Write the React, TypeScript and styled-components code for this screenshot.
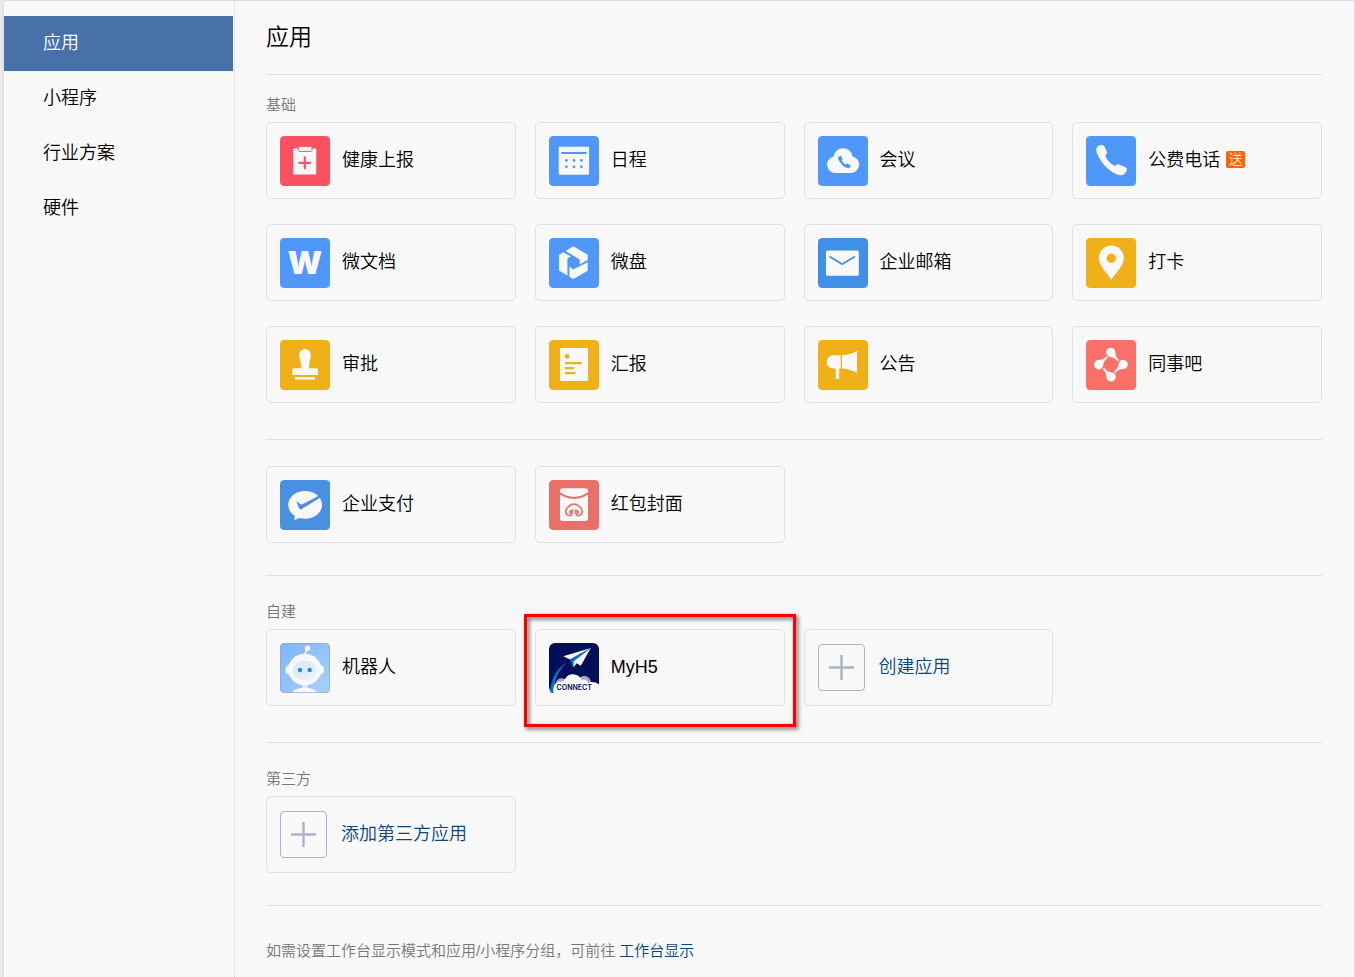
import React from "react";
import styled, { createGlobalStyle } from "styled-components";

const GlobalStyle = createGlobalStyle`
  * { box-sizing: border-box; }
  body {
    margin: 0;
    background: #e8e8e8;
    color: #000;
    font-family: "Liberation Sans", "Noto Sans CJK SC", sans-serif;
    font-weight: 350;
  }
  a { color: inherit; text-decoration: none; }
`;

const Panel = styled.div`
  display: flex;
  min-height: 100vh;
  margin-left: 3px;
  background: #f8f8f8;
  border: 1px solid #dcdde4;
  border-bottom: 0;
  border-radius: 4px 4px 0 0;
`;

const Sidebar = styled.nav`
  flex: 0 0 231px;
  padding: 15px 1px 0 0;
  border-right: 1px dotted #d4d6dc;
`;

const NavItem = styled.a<{ $active?: boolean }>`
  display: flex;
  align-items: center;
  height: 55px;
  padding: 0 0 6px 39px;
  font-size: 18px;
  color: ${(p) => (p.$active ? "#fff" : "#000")};
  background: ${(p) => (p.$active ? "#4871a9" : "transparent")};
`;

const Main = styled.main`
  flex: 1;
  min-width: 0;
  padding: 0 32px 16px 31px;
`;

const Title = styled.h1`
  margin: 0;
  height: 73px;
  font-size: 23px;
  font-weight: 350;
  line-height: 72px;
`;

const Section = styled.section<{ $top: number; $bottom: number }>`
  padding: ${(p) => p.$top}px 0 ${(p) => p.$bottom}px;
  border-top: 1px solid #dfe0e6;
`;

const SectionLabel = styled.h2`
  margin: 0 0 7px;
  font-size: 15px;
  font-weight: 350;
  line-height: 20px;
  color: #777;
`;

const Grid = styled.div`
  display: grid;
  grid-template-columns: repeat(4, 1fr);
  gap: 25px 19px;
`;

const Card = styled.a<{ $add?: boolean }>`
  position: relative;
  display: flex;
  align-items: center;
  gap: ${(p) => (p.$add ? 14 : 12)}px;
  height: 77px;
  padding: 0 13px;
  border: 1px solid #dfe0e8;
  border-radius: 5px;
  font-size: 18px;
  line-height: 24px;
  color: ${(p) => (p.$add ? "#0a4679" : "#000")};
`;

const CardText = styled.span`
  padding-bottom: 2px;
  white-space: nowrap;
`;

const Icon = styled.svg`
  flex: none;
  width: 50px;
  height: 50px;
  border-radius: 4px;
`;

const PlusBox = styled.span`
  display: grid;
  place-items: center;
  flex: none;
  width: 47px;
  height: 47px;
  border: 1px solid #abb4c4;
  border-radius: 4px;
`;

const Badge = styled.span`
  width: 19px;
  height: 17px;
  margin: 0 0 2px -6px;
  border-radius: 2px;
  background: #ff6200;
  color: #fff0dc;
  font-size: 14px;
  line-height: 16px;
  text-align: center;
`;

const Highlight = styled.span`
  position: absolute;
  inset: -16px -12px -22px;
  border: 3px solid #f80000;
  filter: drop-shadow(2px 2px 2px rgba(0, 0, 0, 0.65));
  pointer-events: none;
`;

const Footer = styled.footer`
  padding-top: 35px;
  border-top: 1px solid #dfe0e6;
  font-size: 15px;
  line-height: 20px;
  color: #777;

  a { color: #0a4679; }
`;

const W = "#f8f8f8";
const BLUE = "#4f97f8";
const YELLOW = "#efb019";
const PHONE =
  "M15 9C17 8.7 18 9.5 18.6 10.8L21 16C21.4 17 20.9 17.7 19.8 18.8C19.3 19.4 19.4 20.2 19.7 20.9C21.8 24.8 24.5 27.4 28 29.4C29 29.9 29.8 29.7 30.4 29C31.2 28.1 32.3 27.9 33.3 28.4L39.8 31.6C41 32.3 41.2 33.4 40.7 34.5C39.4 37.6 37.3 39.4 34.3 39.2C28 38.6 20.6 32.6 16.2 26.6C12.5 21.4 10.2 16.6 10.2 13.6C10.2 11.4 12.3 9.4 15 9Z";

type Glyph = { bg: string; art: React.ReactNode };

const glyphs: Record<string, Glyph> = {
  health: {
    bg: "#fb5263",
    art: (
      <>
        <rect x="13.3" y="12.5" width="22.9" height="26" rx="1.2" fill={W} />
        <rect x="18.4" y="10.4" width="13.6" height="5" rx="1.2" fill={W} stroke="#fb5263" />
        <path d="M24.8 21.3v11M19.3 26.8h11" stroke="#fb5263" strokeWidth="2.2" strokeLinecap="round" />
      </>
    ),
  },
  calendar: {
    bg: BLUE,
    art: (
      <>
        <rect x="9.7" y="10.8" width="30.4" height="28" rx="1" fill={W} />
        <path d="M12.3 17h25.4" stroke={BLUE} strokeWidth="2.2" />
        {[24.4, 30.8].map((y) =>
          [17.4, 25, 32.4].map((x) => <circle key={`${x}-${y}`} cx={x} cy={y} r="1.4" fill={BLUE} />)
        )}
      </>
    ),
  },
  meeting: {
    bg: BLUE,
    art: (
      <>
        <path d="M17.5 37A8.4 8.4 0 0 1 15.6 20.4A9.6 9.6 0 0 1 34.6 20.4A8.4 8.4 0 0 1 32.6 37Z" fill={W} />
        <path d={PHONE} fill={BLUE} transform="translate(15.9 16.2) scale(.41)" />
      </>
    ),
  },
  phone: { bg: BLUE, art: <path d={PHONE} fill={W} /> },
  doc: {
    bg: BLUE,
    art: (
      <text x="24.8" y="36" fill={W} fontFamily="Inter, sans-serif" fontWeight="900" fontSize="32" textAnchor="middle">
        W
      </text>
    ),
  },
  disk: {
    bg: BLUE,
    art: (
      <g fill={W}>
        <path d="M16.6 13L24.3 8.3L38.7 16.7V21.9L30.6 26.4V21.4Z" />
        <path d="M14.4 14.2L21.8 18.6L18.4 20.5V37.4L10 32.5V16.9Z" />
        <path d="M38.7 24.3V32.7L24.3 41L20.4 38.8V28.8L24.1 31.6Z" />
      </g>
    ),
  },
  mail: {
    bg: "#4190e8",
    art: (
      <>
        <rect x="8" y="12.4" width="32.8" height="25.4" rx="1.5" fill={W} />
        <path d="M11.5 18.5L24.2 26.3L37 18.5" fill="none" stroke="#4190e8" strokeWidth="1.7" />
      </>
    ),
  },
  pin: {
    bg: YELLOW,
    art: (
      <>
        <path d="M25.3 41.4C22 36.5 12.7 27.5 12.7 20.2A12.6 12.6 0 0 1 37.9 20.2C37.9 27.5 28.6 36.5 25.3 41.4Z" fill={W} />
        <circle cx="25.3" cy="20.3" r="4.7" fill={YELLOW} />
      </>
    ),
  },
  stamp: {
    bg: YELLOW,
    art: (
      <g fill={W}>
        <path d="M21.3 28.2C21.3 22.5 19.2 18.5 19.2 14.7A5.8 5.8 0 0 1 30.8 14.7C30.8 18.5 28.9 22.5 28.9 28.2H36.5Q38 28.2 38 29.7V35H12.2V29.7Q12.2 28.2 13.7 28.2Z" />
        <rect x="15" y="37.1" width="20" height="2.5" />
      </g>
    ),
  },
  report: {
    bg: YELLOW,
    art: (
      <>
        <rect x="11" y="8" width="28" height="33" rx="1.2" fill={W} />
        <circle cx="18.1" cy="16.3" r="2.4" fill={YELLOW} />
        <path d="M16 23.2h16.8M16 28.2h9M16 33.1h10.4" stroke={YELLOW} strokeWidth="2.2" />
      </>
    ),
  },
  horn: {
    bg: YELLOW,
    art: (
      <g fill={W}>
        <path d="M22.7 15.3V28.5H21.2V39H17.7V28.5H15.2A6.6 6.6 0 0 1 15.2 15.3Z" />
        <path d="M24 15.3C30 15 35 13.2 39 10.7V33C35 30.5 30 28.8 24 28.5Z" />
      </g>
    ),
  },
  social: {
    bg: "#fa7068",
    art: (
      <g fill={W}>
        {[0, 90, 180, 270].map((a) => (
          <path
            key={a}
            transform={`rotate(${a} 24.9 24.6)`}
            d="M24.8 7.7A4.6 4.6 0 0 1 29.4 12.2C29.5 15.6 30.7 17.8 33.2 20.3L31.7 21.5C29.7 18.7 27.8 17.4 24.4 16.9A4.6 4.6 0 0 1 24.8 7.7Z"
          />
        ))}
      </g>
    ),
  },
  pay: {
    bg: "#4991e0",
    art: (
      <>
        <path d="M25 11C34.4 11 42 17 42 24.8C42 32.6 34.4 38.8 25 38.8C23 38.8 21 38.5 19.4 38L14.3 40.3L14.8 35.8C10.6 33.2 8.2 29.3 8.2 24.8C8.2 17 15.6 11 25 11Z" fill={W} />
        <path d="M16.3 21.2C17.5 21.2 19 23.6 20.9 24.3C22 24.6 22.9 24 24 23.5L40.2 15L41.3 17.1L21.7 28.9C20.4 29.6 19.6 29.3 19 28Z" fill="#4991e0" />
      </>
    ),
  },
  packet: {
    bg: "#e87068",
    art: (
      <>
        <rect x="11" y="8.2" width="28" height="32.7" rx="2.6" fill={W} />
        <path d="M10.6 13.2Q25 22.6 39.4 13.2" fill="none" stroke="#e87068" strokeWidth="2" />
        <path
          d="M22.6 30.6A1.5 1.5 0 1 0 23.4 33.2V30.2M27.4 30.6A1.5 1.5 0 1 1 26.6 33.2V30.2M22.6 35.2C18.6 36.4 16.3 34 17 30.6C17.8 27 21.6 24.2 25 24.2C28.4 24.2 32.2 27 33 30.6C33.7 34 31.4 36.4 27.4 35.2"
          fill="none"
          stroke="#e87068"
          strokeWidth="1.7"
          strokeLinecap="round"
        />
      </>
    ),
  },
  robot: {
    bg: "url(#robotSky)",
    art: (
      <>
        <defs>
          <linearGradient id="robotSky" x1="0" y1="0" x2="1" y2="1">
            <stop offset="0" stopColor="#7fb4f8" />
            <stop offset="1" stopColor="#a9d2fa" />
          </linearGradient>
          <linearGradient id="robotFace" x1="0" y1="0" x2="1" y2="1">
            <stop offset="0" stopColor="#d5e8fa" />
            <stop offset="1" stopColor="#eaf3fb" />
          </linearGradient>
        </defs>
        <path d="M24.3 12L27.5 5.4" stroke={W} strokeWidth="1.5" />
        <circle cx="27.6" cy="5.3" r="2.7" fill={W} />
        <ellipse cx="9" cy="26.8" rx="3.5" ry="4.6" fill={W} />
        <ellipse cx="40.5" cy="26.8" rx="3.5" ry="4.6" fill={W} />
        <rect x="22" y="41" width="5.6" height="5" fill="#dcebfa" />
        <ellipse cx="24.8" cy="26.6" rx="16.6" ry="15.8" fill={W} />
        <rect x="13" y="17.8" width="23.8" height="19.2" rx="9.6" fill="url(#robotFace)" />
        <circle cx="20" cy="27" r="2.2" fill="#2f80f0" />
        <circle cx="29.7" cy="27" r="2.2" fill="#2f80f0" />
        <path d="M12 50C14 46.3 19 44.8 24.8 44.8C30.6 44.8 35.6 46.3 37.7 50Z" fill={W} />
        <rect x=".5" y=".5" width="49" height="49" rx="4" fill="none" stroke="#84a9d4" strokeOpacity=".7" />
      </>
    ),
  },
  connect: {
    bg: "#000f57",
    art: (
      <>
        <path d="M17.5 19.4C8 25 1.5 36 1 50H5C5 38 9 27.5 17.5 19.4Z" fill="#0a6ed1" />
        <path d="M41.8 5L14.3 13.3L21 16.6Z" fill={W} />
        <path d="M41.8 5L21 16.6L24 24.2L26 18.5Z" fill="#0a6ed1" />
        <path d="M41.8 5L24.8 18.2L24.4 24.4L27.6 20.3L31.8 22.7Z" fill={W} />
        <path d="M7 40C8 35.5 12 34.5 16 36L24 40L31 34.5C36 31 41 34 42 39Z" fill="#a6a8c4" />
        <path d="M4.5 50C3.5 43 6.5 38.5 11.5 38.6C14 38.7 15 38 15.6 36.6C17.6 32.8 20.5 31.2 24 31.3C28 31.4 31 33.5 32.5 36.8C35 35.8 38 36.8 39.3 39.4C43 38.6 47.4 39 50 41.6V50Z" fill={W} />
        <text x="25.2" y="47.4" fill="#000f57" fontFamily="Inter, sans-serif" fontWeight="600" fontSize="7" textAnchor="middle">
          CONNECT
        </text>
      </>
    ),
  },
};

const AppIcon = ({ name }: { name: string }) => (
  <Icon viewBox="0 0 50 50" aria-hidden="true">
    <rect width="50" height="50" rx={name === "connect" ? 6 : 4} fill={glyphs[name].bg} />
    {glyphs[name].art}
  </Icon>
);

type AppCardProps = { icon: string; label: string; badge?: string; highlighted?: boolean };

const AppCard = ({ icon, label, badge, highlighted }: AppCardProps) => (
  <Card href="#">
    <AppIcon name={icon} />
    <CardText>{label}</CardText>
    {badge && <Badge>{badge}</Badge>}
    {highlighted && <Highlight />}
  </Card>
);

const AddCard = ({ label }: { label: string }) => (
  <Card href="#" $add>
    <PlusBox>
      <svg width="25" height="25" viewBox="0 0 25 25" aria-hidden="true">
        <path d="M12.5 0v25M0 12.5h25" stroke="#abb4c4" strokeWidth="2.4" />
      </svg>
    </PlusBox>
    <CardText>{label}</CardText>
  </Card>
);

const basics: AppCardProps[] = [
  { icon: "health", label: "健康上报" },
  { icon: "calendar", label: "日程" },
  { icon: "meeting", label: "会议" },
  { icon: "phone", label: "公费电话", badge: "送" },
  { icon: "doc", label: "微文档" },
  { icon: "disk", label: "微盘" },
  { icon: "mail", label: "企业邮箱" },
  { icon: "pin", label: "打卡" },
  { icon: "stamp", label: "审批" },
  { icon: "report", label: "汇报" },
  { icon: "horn", label: "公告" },
  { icon: "social", label: "同事吧" },
];

const navItems = ["应用", "小程序", "行业方案", "硬件"];

export default function App() {
  return (
    <>
      <GlobalStyle />
      <Panel>
        <Sidebar>
          {navItems.map((item, i) => (
            <NavItem key={item} href="#" $active={i === 0}>
              {item}
            </NavItem>
          ))}
        </Sidebar>
        <Main>
          <Title>应用</Title>
          <Section $top={20} $bottom={36}>
            <SectionLabel>基础</SectionLabel>
            <Grid>
              {basics.map((app) => (
                <AppCard key={app.label} {...app} />
              ))}
            </Grid>
          </Section>
          <Section $top={26} $bottom={32}>
            <Grid>
              <AppCard icon="pay" label="企业支付" />
              <AppCard icon="packet" label="红包封面" />
            </Grid>
          </Section>
          <Section $top={26} $bottom={36}>
            <SectionLabel>自建</SectionLabel>
            <Grid>
              <AppCard icon="robot" label="机器人" />
              <AppCard icon="connect" label="MyH5" highlighted />
              <AddCard label="创建应用" />
            </Grid>
          </Section>
          <Section $top={26} $bottom={32}>
            <SectionLabel>第三方</SectionLabel>
            <Grid>
              <AddCard label="添加第三方应用" />
            </Grid>
          </Section>
          <Footer>
            如需设置工作台显示模式和应用/小程序分组，可前往 <a href="#">工作台显示</a>
          </Footer>
        </Main>
      </Panel>
    </>
  );
}
